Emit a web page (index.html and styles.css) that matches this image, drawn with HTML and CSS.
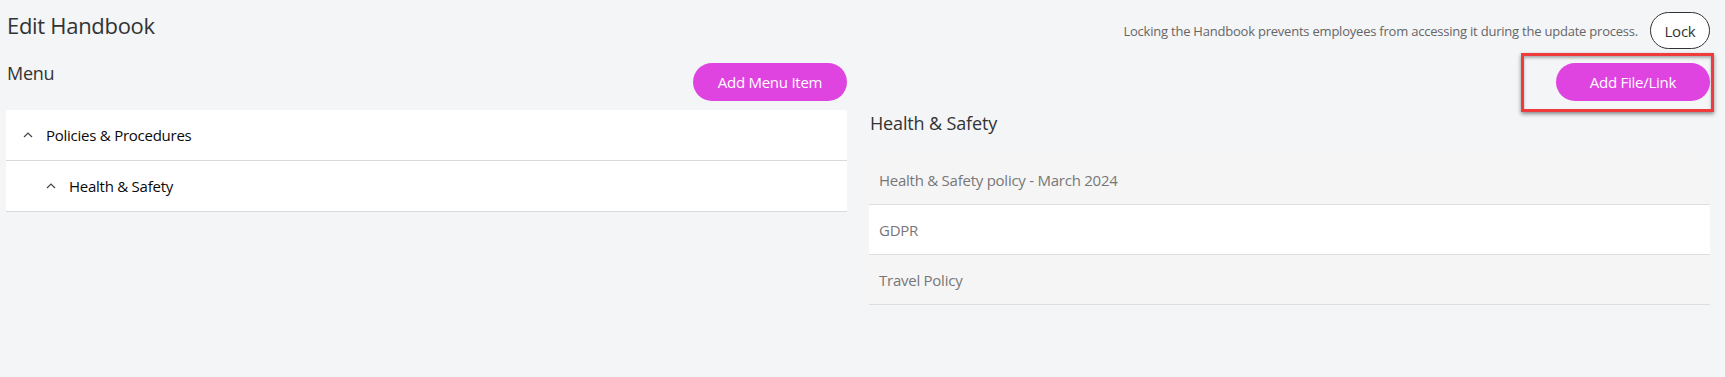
FILE: index.html
```html
<!DOCTYPE html>
<html>
<head>
<meta charset="utf-8">
<link rel="stylesheet" href="styles.css">
</head>
<body>
<div class="page">
  <header class="header">
    <h1 class="title">Edit Handbook</h1>
    <div class="lock-group">
      <span class="lock-note">Locking the Handbook prevents employees from accessing it during the update process.</span>
      <button class="btn-outline">Lock</button>
    </div>
  </header>
  <div class="columns">
    <section class="col">
      <div class="toolbar">
        <h2 class="menu-title">Menu</h2>
        <button class="btn-primary">Add Menu Item</button>
      </div>
      <div class="tree">
        <div class="tree-row">
          <svg class="caret" width="10" height="6" viewBox="0 0 10 6"><polyline points="1,5 5,1 9,5" fill="none" stroke="#444" stroke-width="1.2"/></svg>
          <span>Policies &amp; Procedures</span>
        </div>
        <div class="tree-row level2">
          <svg class="caret" width="10" height="6" viewBox="0 0 10 6"><polyline points="1,5 5,1 9,5" fill="none" stroke="#444" stroke-width="1.2"/></svg>
          <span>Health &amp; Safety</span>
        </div>
      </div>
    </section>
    <section class="col">
      <div class="toolbar right">
        <button class="btn-primary">Add File/Link</button>
      </div>
      <h2 class="section-title">Health &amp; Safety</h2>
      <div class="files">
        <div class="file-row">Health &amp; Safety policy - March 2024</div>
        <div class="file-row">GDPR</div>
        <div class="file-row">Travel Policy</div>
      </div>
    </section>
  </div>
  <div class="highlight"></div>
</div>
</body>
</html>
```

FILE: styles.css
```css
* { box-sizing: border-box; }
html, body { margin: 0; padding: 0; }
body {
  background: #f4f5f7;
  font-family: "Open Sans", "Noto Sans", sans-serif;
  color: #333;
  letter-spacing: -0.25px;
  width: 1725px;
  height: 377px;
  overflow: hidden;
}
.page {
  position: relative;
  padding: 10px 15px 0 6px;
}
.header {
  display: flex;
  justify-content: space-between;
  align-items: flex-start;
  height: 53px;
}
.title {
  margin: 0 0 0 1px;
  font-size: 22px;
  font-weight: 400;
  line-height: 30px;
  color: #333;
  letter-spacing: -0.3px;
}
.lock-group {
  display: flex;
  align-items: center;
  gap: 12px;
  margin-top: 2px;
}
.lock-note {
  font-size: 13px;
  color: #666;
  letter-spacing: -0.22px;
}
.btn-outline {
  height: 37px;
  width: 60px;
  border: 1px solid #333;
  background: #fff;
  border-radius: 19px;
  font-family: inherit;
  font-size: 15px;
  letter-spacing: inherit;
  color: #333;
  padding: 0;
}
.columns {
  display: flex;
  gap: 22px;
}
.col { flex: 1; min-width: 0; }
.toolbar {
  display: flex;
  justify-content: space-between;
  align-items: flex-start;
  height: 38px;
}
.toolbar.right { justify-content: flex-end; }
.menu-title {
  margin: 0 0 0 1px;
  font-size: 18px;
  font-weight: 400;
  line-height: 20px;
  color: #333;
}
.btn-primary {
  height: 38px;
  width: 154px;
  border: none;
  border-radius: 19px;
  background: #e044e0;
  color: #fff;
  font-family: inherit;
  font-size: 15px;
  letter-spacing: inherit;
  padding: 0;
}
.tree {
  margin-top: 9px;
  background: #fff;
}
.tree-row {
  display: flex;
  align-items: center;
  height: 51px;
  border-bottom: 1px solid #d9d9d9;
  padding-left: 17px;
  font-size: 15px;
  color: #0a0a0a;
}
.tree-row.level2 { padding-left: 40px; }
.caret { margin-right: 13px; flex: none; }
.section-title {
  margin: 9px 0 0 1px;
  font-size: 18px;
  font-weight: 400;
  line-height: 26px;
  color: #333;
  letter-spacing: -0.15px;
}
.files { margin-top: 19px; }
.file-row {
  height: 50px;
  display: flex;
  align-items: center;
  padding-left: 10px;
  font-size: 15px;
  color: #777;
  border-bottom: 1px solid #dedede;
  background: #f5f5f5;
}
.file-row:nth-child(2) { background: #fff; }
.highlight {
  position: absolute;
  left: 1521px;
  top: 53px;
  width: 193px;
  height: 59px;
  border: 3px solid #ef3b3b;
  box-shadow: 0 2px 4px rgba(0,0,0,0.45), inset 0 2px 3px rgba(0,0,0,0.3);
}
```
